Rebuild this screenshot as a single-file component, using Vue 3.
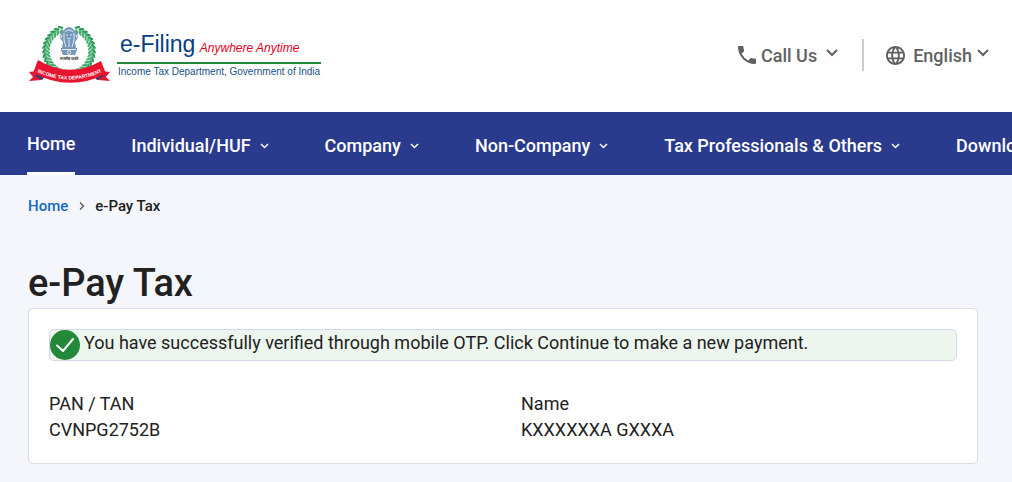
<script setup>
import { ref } from 'vue'

const menus = ['Individual/HUF', 'Company', 'Non-Company', 'Tax Professionals & Others', 'Downloads']

const taxpayer = ref([
  { label: 'PAN / TAN', value: 'CVNPG2752B' },
  { label: 'Name', value: 'KXXXXXXA GXXXA' },
])

// laurel leaves, as angles in degrees from the bottom of the wreath
const leaves = [8, 18, 28, 38, 48, 58, 68, 78, 88, 98, 108, 118, 128, 138, 148, 158]
</script>

<template>
  <div class="page">
    <header class="header">
      <a href="#" class="brand">
        <svg class="emblem" viewBox="0 0 84 60" aria-hidden="true">
          <!-- wreath -->
          <g v-for="side in [1, -1]" :key="side" :transform="`translate(41 26) scale(${side} 1)`">
            <path d="M0 23 A23 23 0 0 0 10 -21" fill="none" stroke="#8ccba4" stroke-width="3" />
            <g v-for="a in leaves" :key="a" :transform="`rotate(${-a})`">
              <ellipse cx="0" cy="21" rx="2.8" ry="1.1" transform="rotate(40 0 21)" fill="#43ad6d" />
              <ellipse cx="1" cy="25" rx="3" ry="1.2" transform="rotate(-35 1 25)" fill="#2b9c58" />
            </g>
          </g>
          <!-- lion capital -->
          <g fill="#7597b9">
            <path d="M36 5 Q41 -1 46 5 L49 7 L50 13 L47 17 L48 23 H34 L35 17 L32 13 L33 7 Z" />
            <path d="M33 23 H49 V25 L47 30 H35 L33 25 Z" />
          </g>
          <g fill="none" stroke="#fff" stroke-width="0.8">
            <path d="M37 7 Q41 3 45 7 M38 10 H40 M42 10 H44 M39 13 Q41 15 43 13 M36 8 V15 L38 22 M46 8 V15 L44 22 M34 10 L33 13 M48 10 L49 13 M41 15 V22" />
            <path d="M34 24.500 H48" />
            <circle cx="41" cy="27.500" r="1.800" />
          </g>
          <text x="41" y="35" class="motto">सत्यमेव जयते</text>
          <!-- ribbon -->
          <path d="M1 47 L9 46 L17 52 L13 55 L1 56 L5 52 Z M82 47 L74 46 L66 52 L70 55 L82 56 L78 52 Z" fill="#dc1c34" />
          <path d="M6 50 L18 50 L14 55 Z M77 50 L65 50 L69 55 Z" fill="#1d4487" />
          <path d="M10 35 Q41 54 73 36 L78 49 Q41 67 5 48 Z" fill="#e8142f" />
          <path id="ribbon-line" d="M5 45 Q41 64 78 45" fill="none" />
          <text class="ribbon-text">
            <textPath href="#ribbon-line" startOffset="50%">INCOME TAX DEPARTMENT</textPath>
          </text>
        </svg>
        <span class="brand-text">
          <span class="brand-title">e-Filing <em>Anywhere Anytime</em></span>
          <span class="brand-dept">Income Tax Department, Government of India</span>
        </span>
      </a>

      <div class="tools">
        <button type="button" class="tool">
          <svg class="phone" viewBox="0 0 18 18" aria-hidden="true">
            <path fill="currentColor" d="M3.620 7.790a15.150 15.150 0 0 0 6.590 6.590l2.200-2.200a1 1 0 0 1 1.020-.24 11.400 11.400 0 0 0 3.570.57 1 1 0 0 1 1 1V17a1 1 0 0 1-1 1A17 17 0 0 1 0 1a1 1 0 0 1 1-1h3.500a1 1 0 0 1 1 1c0 1.250.2 2.450.57 3.570a1 1 0 0 1-.25 1.020z" />
          </svg>
          <span>Call Us</span>
          <svg class="caret caret-wide" viewBox="0 0 12 8" aria-hidden="true"><path d="M1 1 L6 6 L11 1" /></svg>
        </button>
        <button type="button" class="tool language">
          <svg class="globe" viewBox="2 2 20 20" aria-hidden="true">
            <path fill="currentColor" d="M11.990 2C6.470 2 2 6.480 2 12s4.470 10 9.990 10C17.520 22 22 17.520 22 12S17.520 2 11.990 2zm6.930 6h-2.950a15.650 15.650 0 0 0-1.380-3.560A8.030 8.030 0 0 1 18.920 8zM12 4.040c.83 1.200 1.480 2.530 1.910 3.960h-3.820c.43-1.430 1.080-2.760 1.910-3.960zM4.260 14a8.200 8.200 0 0 1 0-4h3.380a16.500 16.500 0 0 0 0 4H4.260zm.82 2h2.950c.32 1.250.78 2.450 1.380 3.560A7.990 7.990 0 0 1 5.080 16zm2.950-8H5.080a7.990 7.990 0 0 1 4.330-3.560A15.650 15.650 0 0 0 8.030 8zM12 19.960c-.83-1.200-1.480-2.530-1.910-3.960h3.820A13.900 13.900 0 0 1 12 19.960zM14.340 14H9.660a14.700 14.700 0 0 1 0-4h4.680a14.700 14.700 0 0 1 0 4zm.25 5.560c.6-1.110 1.060-2.310 1.380-3.560h2.950a8.030 8.030 0 0 1-4.330 3.560zM16.360 14a16.500 16.500 0 0 0 0-4h3.380a8.200 8.200 0 0 1 0 4h-3.380z" />
          </svg>
          <span>English</span>
          <svg class="caret caret-wide" viewBox="0 0 12 8" aria-hidden="true"><path d="M1 1 L6 6 L11 1" /></svg>
        </button>
      </div>
    </header>

    <nav class="nav">
      <a href="#" class="nav-home">Home</a>
      <button v-for="menu in menus" :key="menu" type="button" class="nav-item">
        {{ menu }}
        <svg class="caret" viewBox="0 0 9 6" aria-hidden="true"><path d="M1 1 L4.500 4.500 L8 1" /></svg>
      </button>
    </nav>

    <main class="content">
      <nav class="breadcrumb" aria-label="Breadcrumb">
        <a href="#">Home</a>
        <svg class="separator" viewBox="0 0 6 8" aria-hidden="true"><path d="M1 0.500 L4.500 4 L1 7.500" /></svg>
        <span>e-Pay Tax</span>
      </nav>

      <h1>e-Pay Tax</h1>

      <section class="card">
        <div class="alert" role="status">
          <svg class="check" viewBox="0 0 30 30" aria-hidden="true">
            <circle cx="15" cy="15" r="15" fill="#23883a" />
            <path d="M7 15.500 L13 21 L23 9" fill="none" stroke="#fff" stroke-width="2" stroke-linecap="round" stroke-linejoin="round" />
          </svg>
          <span>You have successfully verified through mobile OTP. Click Continue to make a new payment.</span>
        </div>
        <dl class="details">
          <div v-for="item in taxpayer" :key="item.label">
            <dt>{{ item.label }}</dt>
            <dd>{{ item.value }}</dd>
          </div>
        </dl>
      </section>
    </main>
  </div>
</template>

<style>
body {
  margin: 0;
  background: #f5f6fb;
}
</style>

<style scoped>
.page {
  min-height: 100vh;
  overflow: hidden;
  font-family: Roboto, "Liberation Sans", sans-serif;
  font-size: 18px;
  color: #212121;
}

a {
  text-decoration: none;
}

button {
  padding: 0;
  border: none;
  background: none;
  font: inherit;
  color: inherit;
  cursor: pointer;
}

/* Header */
.header {
  display: flex;
  align-items: center;
  justify-content: space-between;
  height: 112px;
  padding: 0 23px 2px 28px;
  box-sizing: border-box;
  background: #fff;
}

.brand {
  display: flex;
  align-items: center;
  gap: 5px;
  font-family: "Liberation Sans", sans-serif;
}

.emblem {
  width: 84px;
  height: 60px;
}

.motto {
  font-size: 4px;
  font-weight: 700;
  text-anchor: middle;
  fill: #222;
}

.ribbon-text {
  font-size: 5px;
  font-weight: 700;
  text-anchor: middle;
  fill: #fff;
}

.brand-text {
  display: flex;
  flex-direction: column;
  white-space: nowrap;
}

.brand-title {
  padding: 0 3px;
  border-bottom: 2px solid #22873a;
  font-size: 23px;
  line-height: 28px;
  color: #073f80;
}

.brand-title em {
  margin-left: -2px;
  font-size: 12px;
  color: #e3001e;
}

.brand-dept {
  padding: 0 1px;
  font-size: 10px;
  line-height: 16px;
  color: #175184;
}

.tools {
  display: flex;
  align-items: center;
  color: #616161;
}

.tool {
  display: flex;
  align-items: center;
  height: 32px;
  font-weight: 500;
}

.language {
  margin-left: 24px;
  padding-left: 22px;
  border-left: 2px solid #ccc;
}

.phone {
  width: 18px;
  height: 18px;
  margin-right: 5px;
}

.globe {
  width: 19px;
  height: 19px;
  margin-right: 8px;
}

.caret {
  width: 9px;
  height: 6px;
  margin-left: 9px;
  fill: none;
  stroke: currentColor;
  stroke-width: 1.5;
}

.caret-wide {
  width: 12px;
  height: 8px;
  margin-bottom: 4px;
  stroke-width: 2;
}

.language .caret-wide {
  margin-left: 5px;
}

/* Main menu */
.nav {
  display: flex;
  height: 63px;
  padding: 0 27px;
  background: #2a3a8c;
  color: #fff;
  font-weight: 500;
  white-space: nowrap;
}

.nav-home {
  margin-right: 56px;
  border-bottom: 3px solid #fff;
  line-height: 64px;
  color: #fff;
}

.nav-item {
  display: flex;
  align-items: center;
  flex-shrink: 0;
  margin-right: 56px;
  padding-top: 4px;
}

/* Content */
.content {
  padding: 21px 34px 18px 28px;
}

.breadcrumb {
  display: flex;
  align-items: center;
  font-size: 15px;
  font-weight: 500;
  line-height: 20px;
}

.breadcrumb a {
  color: #1268c4;
}

.separator {
  width: 6px;
  height: 8px;
  margin: 0 10px 0 11px;
  fill: none;
  stroke: #555;
  stroke-width: 1.3;
}

h1 {
  margin: 44px 0 1px;
  font-size: 38px;
  font-weight: 500;
  line-height: 47px;
}

.card {
  padding: 20px;
  border: 1px solid #d9daea;
  border-radius: 5px;
  background: #fff;
}

.alert {
  display: flex;
  gap: 4px;
  border: 1px solid #d5d8e8;
  border-radius: 5px;
  background: #edf6ee;
  line-height: 26px;
}

.check {
  flex-shrink: 0;
  width: 30px;
  height: 30px;
}

.details {
  display: grid;
  grid-template-columns: 1fr 1fr;
  column-gap: 36px;
  margin: 30px 0 0;
  line-height: 26px;
}

.details dd {
  margin: 0;
}
</style>
